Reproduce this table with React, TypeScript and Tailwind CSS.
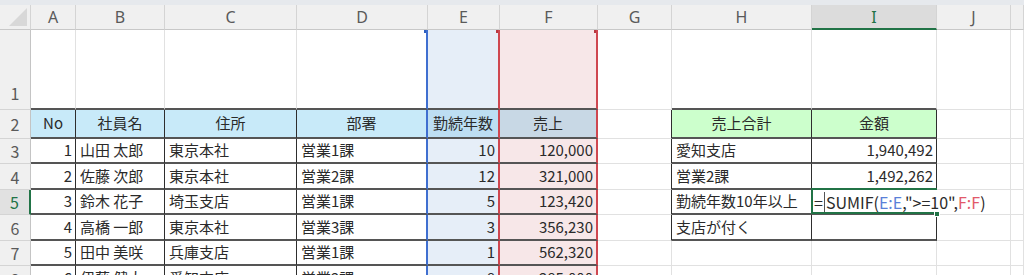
const COLS = ['A', 'B', 'C', 'D', 'E', 'F', 'G', 'H', 'I', 'J', ''];

const employees = [
  ['1', '山田 太郎', '東京本社', '営業1課', '10', '120,000'],
  ['2', '佐藤 次郎', '東京本社', '営業2課', '12', '321,000'],
  ['3', '鈴木 花子', '埼玉支店', '営業1課', '5', '123,420'],
  ['4', '高橋 一郎', '東京本社', '営業3課', '3', '356,230'],
  ['5', '田中 美咲', '兵庫支店', '営業1課', '1', '562,320'],
  ['6', '伊藤 健太', '愛知支店', '営業2課', '8', '285,000'],
];

const summary = [
  ['愛知支店', '1,940,492'],
  ['営業2課', '1,492,262'],
  ['勤続年数10年以上', ''],
  ['支店が付く', ''],
];

const headers = ['No', '社員名', '住所', '部署', '勤続年数', '売上'];

// 罫線
const DARK_R = 'border-r border-r-[#2e2e2e]';
const GRID_R = 'border-r border-r-[#e1e1e1]';
const BLUE_R = 'border-r-2 border-r-[#3f6fd0]';
const RED_R = 'border-r-2 border-r-[#cf4750]';
const DARK_B = 'border-b-2 border-b-[#555555]';
const GRID_B = 'border-b border-b-[#e1e1e1]';

const rightBorder = (r: number, c: number) => {
  if (c === 3) return BLUE_R;
  if (c === 4 || c === 5) return RED_R;
  if (c <= 2) return r >= 2 ? DARK_R : GRID_R;
  if (c >= 6 && c <= 8 && r >= 2 && r <= 6) {
    if (c === 8 && r === 5) return '';
    return DARK_R;
  }
  return GRID_R;
};

const bottomBorder = (r: number, c: number) => {
  if (c <= 5) return DARK_B;
  if ((c === 7 || c === 8) && r <= 6) return DARK_B;
  return GRID_B;
};

const background = (r: number, c: number) => {
  if (r === 2) {
    if (c <= 3) return 'bg-[#c8eaf9]';
    if (c === 4) return 'bg-[#bddef2]';
    if (c === 5) return 'bg-[#c8d8e5]';
    if (c === 7 || c === 8) return 'bg-[#ccffcc]';
    return '';
  }
  if (c === 4) return 'bg-[#e6eef8]';
  if (c === 5) return 'bg-[#f7e7e8]';
  return '';
};

function Formula() {
  return (
    <span className="flex items-center text-[16px]">
      <span>=</span>
      <span className="mx-[1px] inline-block h-[20px] w-px bg-[#555]" />
      <span>SUMIF(</span>
      <span className="text-[#5a80d8]">E:E</span>
      <span>,"&gt;=10",</span>
      <span className="text-[#e2596a]">F:F</span>
      <span>)</span>
    </span>
  );
}

function cellContent(r: number, c: number) {
  if (r === 2) {
    if (c <= 5) return { text: headers[c], align: 'center' };
    if (c === 7) return { text: '売上合計', align: 'center' };
    if (c === 8) return { text: '金額', align: 'center' };
    return null;
  }
  if (r >= 3) {
    const emp = employees[r - 3];
    if (emp && c <= 5) {
      const right = c === 0 || c === 4 || c === 5;
      return { text: emp[c], align: right ? 'right' : 'left' };
    }
    const sum = summary[r - 3];
    if (sum && c === 7) return { text: sum[0], align: 'left' };
    if (sum && c === 8) return { text: sum[1], align: 'right' };
  }
  return null;
}

function App() {
  const rowNums = [1, 2, 3, 4, 5, 6, 7, 8];

  return (
    <div
      className="h-[275px] w-[1024px] overflow-hidden bg-white text-[15px] text-[#2a2a2a]"
      style={{ fontFamily: '"Noto Sans CJK JP", "Noto Sans", sans-serif' }}
    >
      <div className="h-[5px] bg-[#e6e9ed]" />
      <div className="grid grid-cols-[31px_45px_89px_132px_131px_72px_98px_74px_140px_125px_74px_1fr] grid-rows-[25px_80px_29px_25px_26px_25px_26px_25px_26px]">
        {/* Column headers */}
        <div className="relative border-b border-r border-b-[#c8c8c8] border-r-[#d4d4d4] bg-[#f0f0f0]">
          <svg className="absolute left-0 top-0" width="31" height="25">
            <polygon points="27,3 27,21 9,21" fill="#d8d8d8" />
          </svg>
        </div>
        {COLS.map((col, i) =>
          col === 'I' ? (
            <div
              key={i}
              className="flex items-center justify-center border-b-2 border-r border-b-[#217346] border-r-[#d4d4d4] bg-[#dcdcdc] text-[16px] text-[#217346]"
              style={{ fontFamily: '"Noto Sans", sans-serif' }}
            >
              {col}
            </div>
          ) : (
            <div
              key={i}
              className="flex items-center justify-center border-b border-r border-b-[#c8c8c8] border-r-[#d4d4d4] bg-[#f0f0f0] text-[16px] text-[#5a5a5a]"
              style={{ fontFamily: '"Noto Sans", sans-serif' }}
            >
              {col}
            </div>
          )
        )}

        {rowNums.map(r => (
          <div key={r} className="contents">
            {r === 5 ? (
              <div className="flex items-center justify-center border-b border-r-2 border-b-[#d4d4d4] border-r-[#217346] bg-[#e1e1e1] text-[16px] text-[#217346]">
                {r}
              </div>
            ) : (
              <div
                className={`flex justify-center border-b border-r border-b-[#d4d4d4] border-r-[#c4c4c4] bg-[#f0f0f0] text-[16px] text-[#5a5a5a] ${
                  r === 1 ? 'items-end pb-[4px]' : 'items-center'
                }`}
              >
                {r}
              </div>
            )}
            {COLS.map((_, c) => {
              const content = cellContent(r, c);
              const isFormula = r === 5 && c === 8;
              const alignCls =
                content?.align === 'right'
                  ? 'justify-end pr-[3px]'
                  : content?.align === 'center'
                    ? 'justify-center'
                    : 'justify-start pl-[4px]';
              return (
                <div
                  key={c}
                  className={`relative flex items-center whitespace-nowrap ${rightBorder(r, c)} ${bottomBorder(r, c)} ${background(r, c)} ${
                    isFormula ? 'z-10 overflow-visible pl-[2px]' : `overflow-hidden ${alignCls}`
                  }`}
                >
                  {isFormula ? (
                    <>
                      <Formula />
                      <div className="absolute -left-px -right-0 -top-[2px] -bottom-[1px] border-y-2 border-l-2 border-[#217346]" />
                      <div className="absolute -bottom-[4px] -right-[3px] h-[6px] w-[6px] border border-white bg-[#217346]" />
                    </>
                  ) : (
                    content?.text
                  )}
                  {r === 1 && c === 3 && (
                    <div className="absolute -right-[2px] top-0 h-[3px] w-[4px] bg-[#2f5fbf]" />
                  )}
                  {r === 1 && (c === 4 || c === 5) && (
                    <div className="absolute -right-[2px] top-0 h-[3px] w-[4px] bg-[#b83840]" />
                  )}
                </div>
              );
            })}
          </div>
        ))}
      </div>
    </div>
  );
}

export default App;
